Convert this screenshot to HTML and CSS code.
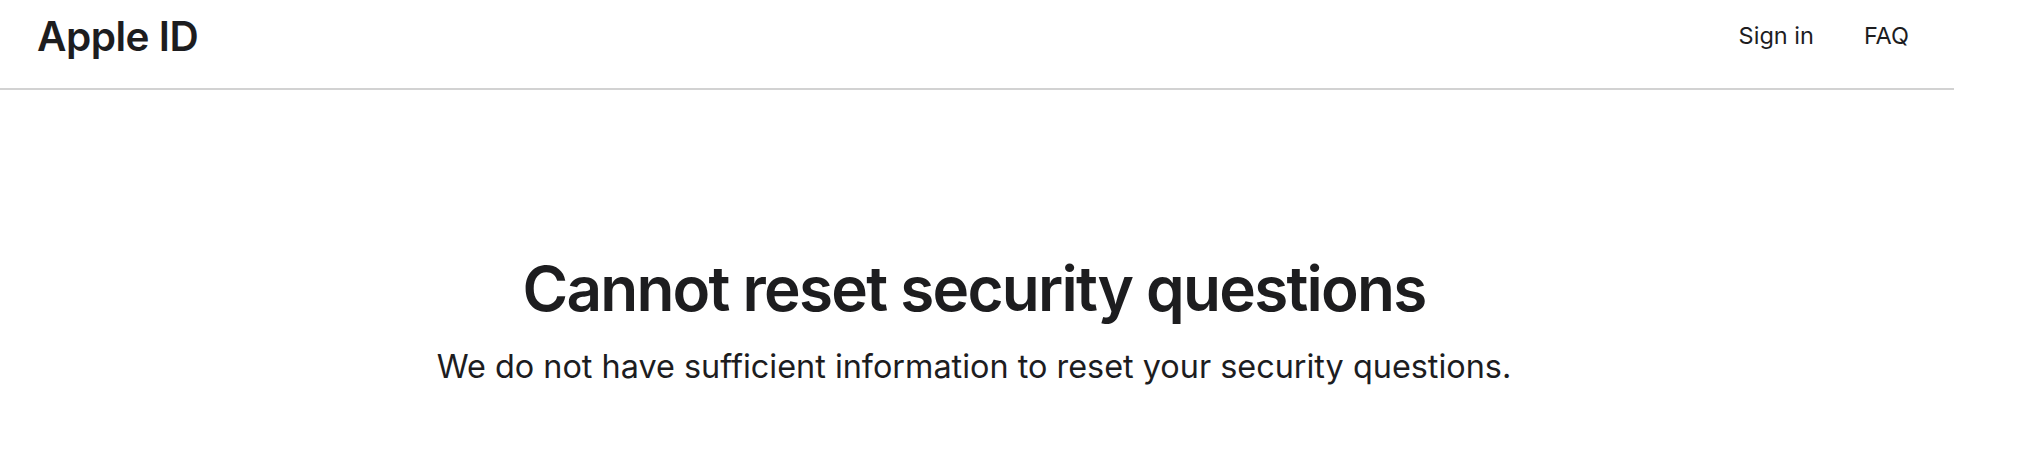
FILE: index.html
```html
<!DOCTYPE html>
<html lang="en">
<head>
<meta charset="utf-8">
<title>Apple ID</title>
<link rel="stylesheet" href="styles.css">
</head>
<body>
<div class="page">
  <header class="header">
    <div class="brand">Apple ID</div>
    <nav class="nav">
      <a class="nav-link" href="#">Sign in</a>
      <a class="nav-link" href="#">FAQ</a>
    </nav>
  </header>
  <main class="main">
    <h1 class="title">Cannot reset security questions</h1>
    <p class="subtitle">We do not have sufficient information to reset your security questions.</p>
  </main>
</div>
</body>
</html>
```

FILE: styles.css
```css
html, body {
  margin: 0;
  padding: 0;
  background: #ffffff;
}
body {
  font-family: Inter, "Noto Sans", "Liberation Sans", sans-serif;
  color: #1d1d1f;
}
.page {
  width: 1954px;
}
.header {
  height: 90px;
  box-sizing: border-box;
  border-bottom: 2px solid #d2d2d2;
  display: flex;
  align-items: center;
  justify-content: space-between;
  padding: 0 45px 0 37px;
}
.brand {
  font-size: 40.5px;
  font-weight: 600;
  letter-spacing: -0.5px;
  margin-top: -16px;
}
.nav {
  display: flex;
  gap: 50px;
  margin-top: -18px;
}
.nav-link {
  font-size: 23.5px;
  color: #1d1d1f;
  text-decoration: none;
}
.main {
  text-align: center;
  padding: 165px 6px 0 0;
}
.title {
  margin: 0;
  font-size: 62px;
  font-weight: 600;
  letter-spacing: -1.75px;
  line-height: 1.1;
}
.subtitle {
  margin: 23px 0 0;
  font-size: 32.4px;
  font-weight: 400;
  line-height: 1.3;
}
```
